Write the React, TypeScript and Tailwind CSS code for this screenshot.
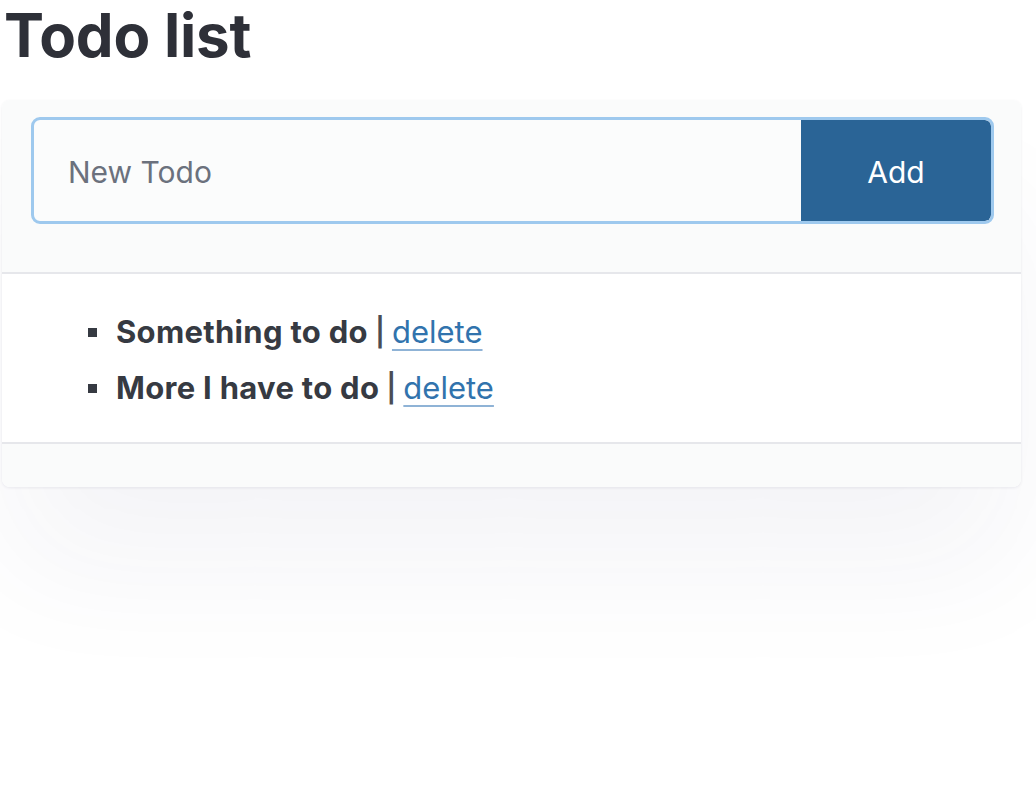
import React, { useState } from "react";

type Todo = { id: number; text: string };

export default function App() {
  const [todos, setTodos] = useState<Todo[]>([
    { id: 1, text: "Something to do" },
    { id: 2, text: "More I have to do" },
  ]);
  const [draft, setDraft] = useState("");

  const add = () => {
    if (!draft.trim()) return;
    setTodos([...todos, { id: Date.now(), text: draft.trim() }]);
    setDraft("");
  };

  return (
    <main className="min-h-[796px] w-[1036px] bg-white font-['Inter','Noto_Sans',sans-serif] text-[#2f3239]">
      <h1 className="pl-[4px] pt-[3px] text-[60px] font-bold leading-[64px] tracking-[-0.2px] text-[#2e3038]">
        Todo list
      </h1>
      <section className="mt-[33px] ml-[2px] w-[1019px] overflow-hidden rounded-[8px] bg-white shadow-[0_1px_3px_rgba(30,30,60,0.08),0_90px_130px_-10px_rgba(40,40,90,0.05)]">
        <div className="h-[174px] border-b-2 border-[#e6e7eb] bg-[#fafbfb] px-[29px] pt-[17px]">
          <form
            onSubmit={(e) => {
              e.preventDefault();
              add();
            }}
            className="flex h-[107px] w-[963px] overflow-hidden rounded-[9px] border-[3px] border-[#9ec9ee] bg-[#fbfcfc]"
          >
            <input
              value={draft}
              onChange={(e) => setDraft(e.target.value)}
              placeholder="New Todo"
              className="min-w-0 flex-1 bg-transparent pl-[34px] pt-[4px] text-[30px] text-[#3a3d45] outline-none placeholder:text-[#6b717d]"
            />
            <button className="w-[190px] rounded-r-[6px] bg-[#2a6496] pt-[4px] text-[30px] text-white">Add</button>
          </form>
        </div>
        <ul className="h-[168px] list-none pl-[86px] pt-[30px]">
          {todos.map((t) => (
            <li key={t.id} className="flex h-[56px] items-center text-[31px] leading-[40px]">
              <span className="mr-[19px] inline-block h-[9px] w-[9px] bg-[#363a42]" />
              <strong className="font-bold tracking-[0.3px] text-[#363a42]">{t.text}</strong>
              <span className="mx-[7px] text-[28px] font-semibold text-[#4a4d55]">|</span>
              <a
                href="#"
                onClick={(e) => {
                  e.preventDefault();
                  setTodos(todos.filter((x) => x.id !== t.id));
                }}
                className="text-[#3173ad] underline decoration-[#8fb3d6] decoration-2 underline-offset-[6px]"
              >
                delete
              </a>
            </li>
          ))}
        </ul>
        <div className="h-[45px] border-t-2 border-[#e6e7eb] bg-[#fafbfb]" />
      </section>
    </main>
  );
}
